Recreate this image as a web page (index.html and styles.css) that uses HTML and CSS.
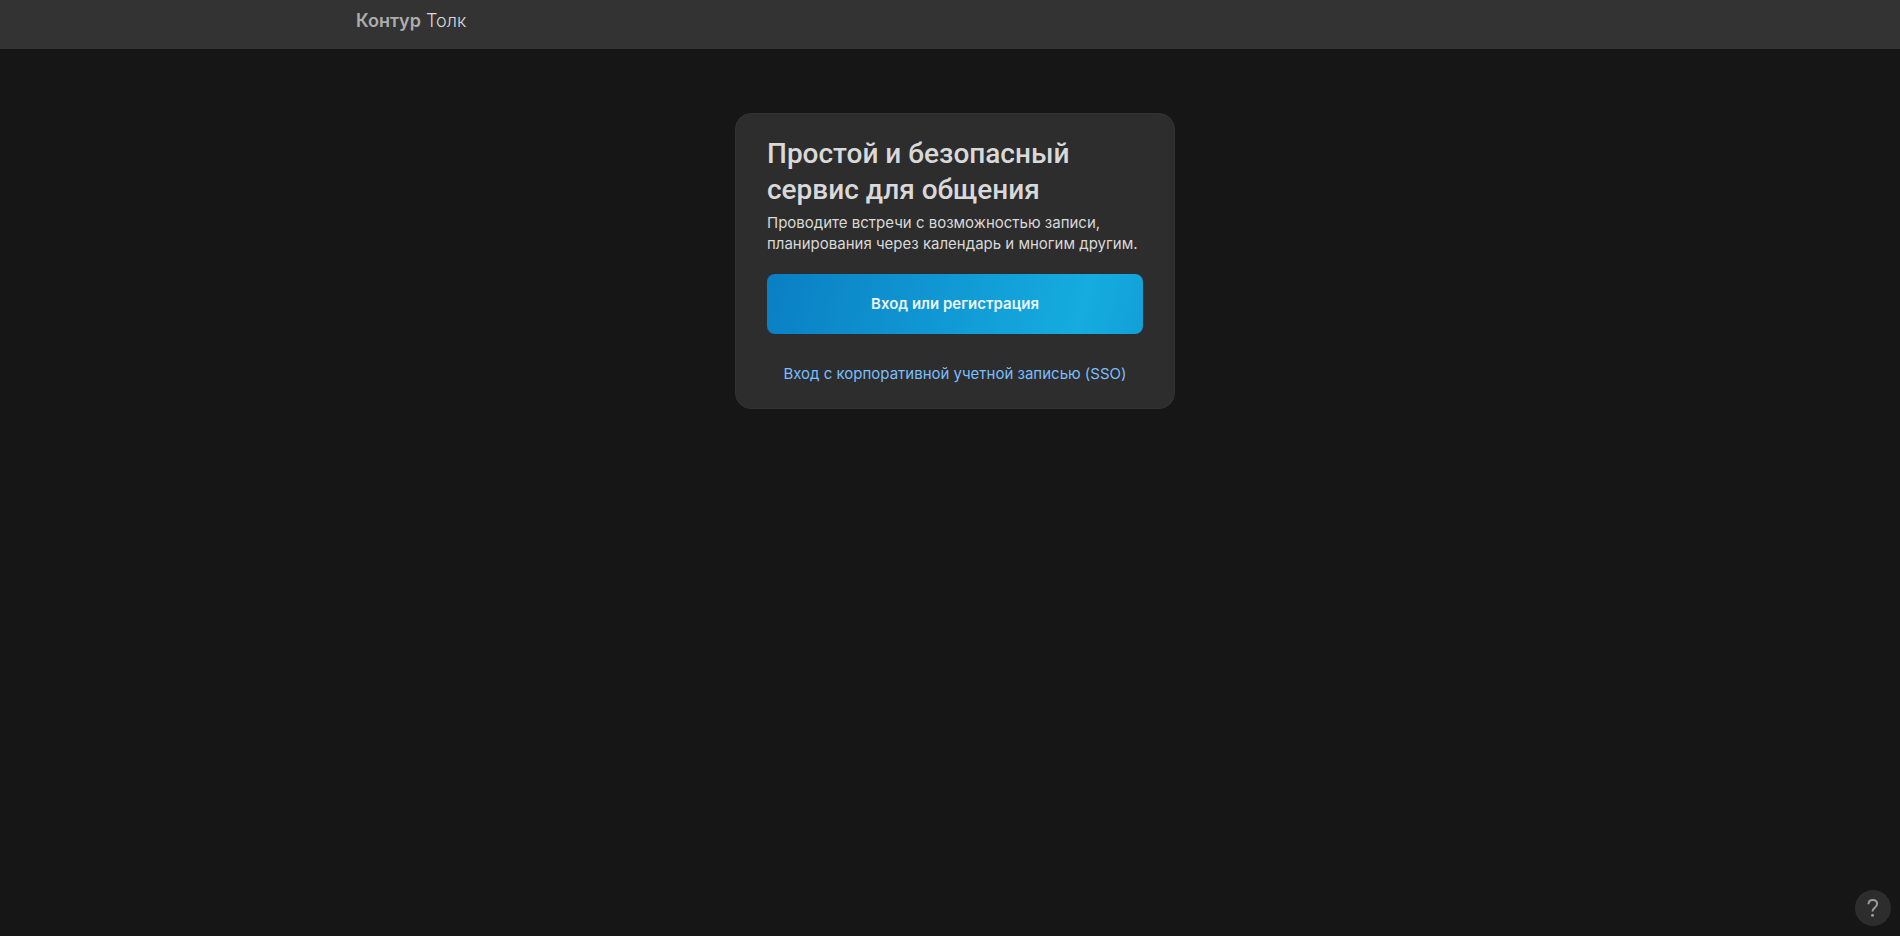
FILE: index.html
```html
<!DOCTYPE html>
<html lang="ru">
<head>
  <meta charset="UTF-8" />
  <meta name="viewport" content="width=device-width, initial-scale=1.0" />
  <title>Контур Толк</title>
  <link rel="stylesheet" href="styles.css">
</head>
<body>
  <header class="header">
    <a class="logo" href="#"><span class="logo-brand">Контур</span> Толк</a>
  </header>

  <main class="main">
    <section class="card">
      <h1 class="title">Простой и безопасный сервис для общения</h1>
      <p class="text">Проводите встречи с возможностью записи, планирования через календарь и многим другим.</p>
      <button class="login" type="button">Вход или регистрация</button>
      <a class="sso" href="#">Вход с корпоративной учетной записью (SSO)</a>
    </section>
  </main>

  <button class="help" type="button" aria-label="Помощь">
    <svg width="12" height="18" viewBox="0 0 12 18" fill="none" stroke="#9a9a9a" stroke-width="2">
      <path d="M1.500 5.200C1.500 2.600 3.200 1 5.800 1c2.600 0 4.300 1.500 4.300 3.800 0 1.800-1 2.800-2.200 3.800C6.400 9.700 5.500 10.500 5.500 12.600" />
      <circle cx="5.500" cy="16.300" r="1.500" fill="#9a9a9a" stroke="none" />
    </svg>
  </button>
</body>
</html>
```
FILE: styles.css
```css
body {
  margin: 0;
  min-height: 100vh;
  background-color: #161616;
  color: #d9d9d9;
  font-family: Inter, "Liberation Sans", sans-serif;
}
.header {
  box-sizing: border-box;
  height: 49px;
  padding: 9px 356px;
  background-color: #333;
}
.logo {
  display: block;
  color: #d9d9d9;
  font-size: 18px;
  font-weight: 300;
  line-height: 24px;
  text-decoration: none;
}
.logo-brand {
  color: #adadad;
  font-weight: 600;
}
.main {
  display: flex;
  justify-content: center;
  padding: 64px 0 0 10px;
}
.card {
  display: flex;
  flex-direction: column;
  box-sizing: border-box;
  width: 440px;
  padding: 22px 31px;
  border: 1px solid #323232;
  border-radius: 16px;
  background-color: #2d2d2d;
}
.title {
  margin: 0;
  font-family: Roboto, "Liberation Sans", sans-serif;
  font-size: 28px;
  font-weight: 500;
  line-height: 36px;
}
.text {
  margin: 4px 0 20px;
  font-size: 15px;
  line-height: 21px;
}
.login {
  height: 60px;
  padding: 0 0 2px;
  border: none;
  border-radius: 8px;
  background: linear-gradient(105deg, #0a7fc4, #15acdf 83%, #11a0d8);
  color: #ebf5fa;
  font-family: inherit;
  font-size: 15px;
  font-weight: 600;
  cursor: pointer;
}
.sso {
  margin-top: 28px;
  color: #7abfff;
  font-size: 15px;
  line-height: 24px;
  text-align: center;
  text-decoration: none;
}
.help {
  position: fixed;
  right: 9px;
  bottom: 10px;
  display: flex;
  align-items: center;
  justify-content: center;
  width: 36px;
  height: 36px;
  padding: 0;
  border: none;
  border-radius: 50%;
  background-color: #2d2d2d;
  cursor: pointer;
}
```
